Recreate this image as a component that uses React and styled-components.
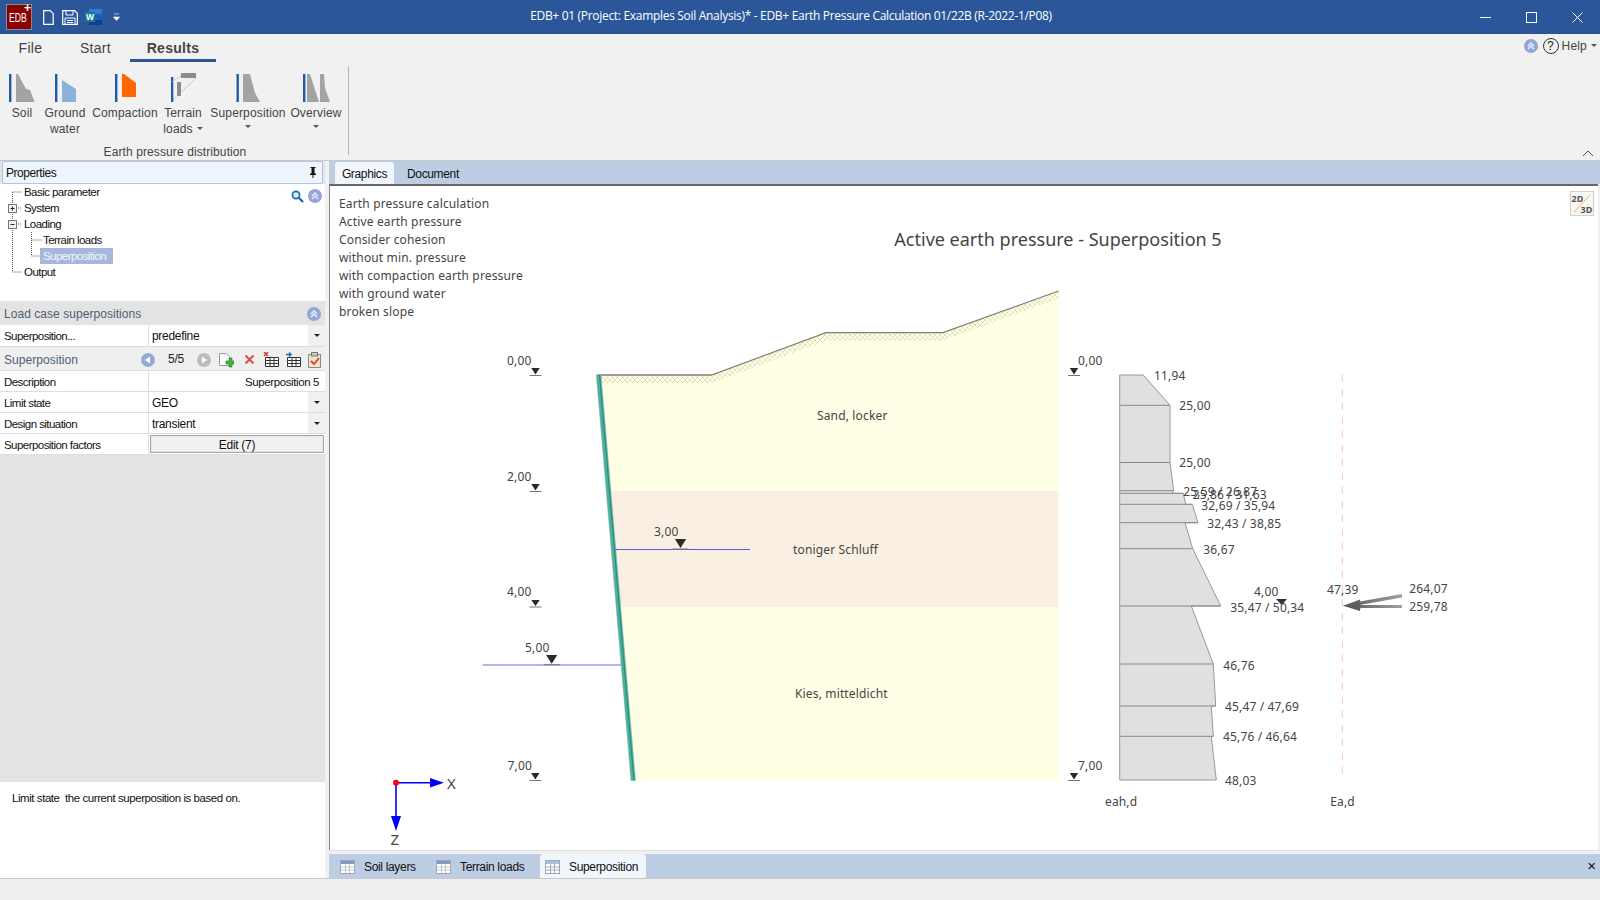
import React from "react";
import styled, { createGlobalStyle } from "styled-components";

const UI = `"Liberation Sans", Arial, sans-serif`;
const CAD = `"Noto Sans", "Open Sans", sans-serif`;

const Global = createGlobalStyle`
  html, body { margin: 0; padding: 0; background: #f1f0ef; overflow: hidden; }
  #root { width: 1600px; height: 900px; }
  * { box-sizing: border-box; }
`;

const Page = styled.div`
  width: 1600px; height: 900px; display: flex; flex-direction: column;
  font-family: ${UI}; font-size: 12px; color: #111; background: #f1f1f1;
`;

/* ---------- title bar ---------- */
const TitleBar = styled.header`
  height: 34px; flex: none; background: #2b579a; color: #fff;
  display: flex; align-items: center;
`;
const Quick = styled.div`width: 122px; flex: none; display: flex; align-items: center; padding-left: 6px;`;
const Logo = styled.div`
  width: 26px; height: 26px; background: #8b0000; border: 1px solid #8a8a8a; position: relative;
  font: 400 12px/26px "Liberation Sans", sans-serif; color: #fff; text-align: center;
  &::after { content: "+"; position: absolute; right: 0; top: -3px; font-size: 12px; line-height: 12px; font-weight: 700; }
`;
const LogoText = styled.span`display: inline-block; transform: scaleX(0.72); transform-origin: 45% 50%; margin-left: -2px;`;
const QuickIcon = styled.svg`display: block; flex: none; margin-left: ${p => p.$ml}px;`;
const Title = styled.div`flex: 1; text-align: center; font: 400 12px/16px "Open Sans", sans-serif; margin-top: -3px; letter-spacing: -0.31px;`;
const WinControls = styled.div`width: 140px; flex: none; display: flex; align-items: center;`;
const WinBtn = styled.svg`display: block; flex: none; margin-left: ${p => p.$ml}px;`;

/* ---------- ribbon ---------- */
const RibbonTabs = styled.nav`
  height: 28px; flex: none; display: flex; align-items: flex-start; position: relative; background: #f1f1f1;
`;
const RibbonTab = styled.div`
  width: ${p => p.$w}px; height: 28px; text-align: center; font: ${p => p.$on ? 700 : 400} 14px/29px ${UI}; color: #444; letter-spacing: 0.3px;
  border-bottom: ${p => p.$on ? "3px solid #2b579a" : "none"};
`;
const HelpArea = styled.div`
  margin-left: auto; display: flex; align-items: center; height: 24px; padding-right: 3px; font: 12px/24px ${UI}; color: #444; letter-spacing: 0.2px;
`;
const HelpMark = styled.span`
  width: 16px; height: 16px; border: 1.3px solid #333; border-radius: 50%; font: 12px/14px ${UI};
  text-align: center; margin: 0 3px 0 5px; color: #222;
`;
const Ribbon = styled.section`
  height: 99px; flex: none; display: flex; position: relative; background: #f1f1f1; border-bottom: 1px solid #c8c8c8; padding-left: 4px;
`;
const RibbonGroup = styled.div`
  width: 344px; height: 98px; display: flex; flex-direction: column;
`;
const RibbonSeparator = styled.div`width: 1px; margin: 4px 0 5px; background: #b4b4b4;`;
const RibbonButtons = styled.div`display: flex; height: 82px; padding-top: 10px;`;
const RibbonButton = styled.div`
  width: ${p => p.$w}px; display: flex; flex-direction: column; align-items: center;
  font: 12px/16px ${UI}; color: #444; text-align: center; letter-spacing: 0.15px;
`;
const RibbonIcon = styled.svg`display: block; margin-bottom: 1px;`;
const GroupLabel = styled.div`
  width: 342px; height: 16px; text-align: center; font: 12px/17px ${UI}; color: #444; letter-spacing: 0.1px;
`;
const Caret = styled.span`
  display: inline-block; width: 0; height: 0; border: 3px solid transparent; border-top: 3px solid #555; border-bottom: 0;
  margin: ${p => p.$block ? "4px auto 0" : "0 0 2px 4px"}; vertical-align: middle;
`;
const Collapse = styled.svg`position: absolute; right: 6px; bottom: 3px;`;

/* ---------- main ---------- */
const Main = styled.main`flex: 1; display: flex; min-height: 0;`;
const LeftPane = styled.aside`
  width: 325px; flex: none; display: flex; flex-direction: column; background: #e3e3e3;
`;
const PropHeader = styled.div`
  height: 23px; flex: none; background: #eef5fd; border: 1px solid #a9c6ea; border-radius: 2px; margin: 0 2px;
  display: flex; align-items: center; justify-content: space-between; padding: 0 5px 0 3px; font-size: 12px; letter-spacing: -0.45px;
`;
const Tree = styled.div`height: 117px; flex: none; background: #fff; position: relative;`;
const TreeLines = styled.svg`position: absolute; left: 0; top: 0;`;
const TreeRow = styled.div`
  height: 16px; line-height: 16px; padding-left: ${p => p.$x}px; font-size: 11.5px; letter-spacing: -0.55px; position: relative;
`;
const TreeText = styled.span`
  display: inline-block; height: 16px; padding: 0 ${p => p.$sel ? "7px 0 3px" : "0"};
  background: ${p => p.$sel ? "#a4b8de" : "transparent"}; color: ${p => p.$sel ? "#f4f6fb" : "#111"};
`;
const TreeTools = styled.div`position: absolute; right: 3px; top: 5px; display: flex; align-items: center; gap: 3px;`;
const SectionHead = styled.div`
  height: 24px; flex: none; background: #e3e3e3; display: flex; align-items: center; justify-content: space-between;
  padding: 1px 4px 0 4px; color: #4f5e72; font: 12px/24px ${UI}; letter-spacing: 0.05px;
`;
const GridRow = styled.div`
  height: ${p => p.$h || 21}px; flex: none; display: flex; background: #fff; border-bottom: 1px solid #dedede;
`;
const Cell = styled.div`
  width: ${p => p.$w}px; flex: ${p => p.$w ? "none" : 1}; display: flex; align-items: center;
  padding: ${p => p.$first ? "0 4px" : "1px 4px 0"}; padding-right: ${p => p.$right ? 6 : 4}px; padding-left: ${p => p.$w ? 4 : 3}px;
  border-right: ${p => p.$w ? "1px solid #dedede" : "none"}; position: relative;
  font-size: ${p => p.$tight ? 11.5 : 12}px; letter-spacing: ${p => p.$right ? -0.4 : p.$tight ? -0.55 : -0.3}px;
  justify-content: ${p => p.$right ? "flex-end" : "flex-start"};
`;
const DropBtn = styled.span`
  position: absolute; right: 0; top: 0; bottom: 0; width: 17px; background: #f0f0f0; display: flex; align-items: center; justify-content: center;
  &::after { content: ""; border: 3px solid transparent; border-top: 3px solid #222; border-bottom: 0; }
`;
const SubHead = styled.div`
  height: 24px; flex: none; background: #efefef; border-bottom: 1px solid #dedede; display: flex; align-items: center;
  padding: 2px 0 0 4px; color: #4f5e72; font: 12px/24px ${UI}; letter-spacing: 0.05px;
`;
const Pager = styled.div`margin-left: auto; display: flex; align-items: center; color: #222; font: 12px ${UI};`;
const PagerText = styled.span`width: 42px; text-align: center; letter-spacing: -0.3px; margin-top: -2px;`;
const PagerIcon = styled.svg`display: block; flex: none; margin-right: ${p => p.$mr || 0}px;`;
const EditBtn = styled.div`
  margin: 1px 1px 1px 1px; flex: 1; height: 18px; border: 1px solid #a8a8a8; background: #f1f1f1; box-shadow: inset 0 0 0 1px #e6e6e6;
  text-align: center; line-height: 18px; letter-spacing: -0.3px;
`;
const Filler = styled.div`flex: 1; background: #e3e3e3;`;
const HelpBox = styled.div`
  height: 96px; flex: none; background: #fff; padding: 8px 12px; font-size: 11.5px; letter-spacing: -0.44px; line-height: 16px; white-space: pre;
`;

const RightPane = styled.div`flex: 1; display: flex; flex-direction: column; min-width: 0;`;
const DocTabs = styled.div`
  height: 23px; flex: none; margin-left: 4px; background: #bccde4; display: flex; align-items: flex-end; padding-left: 6px;
`;
const DocTab = styled.div`
  width: ${p => p.$w}px; height: 22px; text-align: center; line-height: 24px; font-size: 12px; letter-spacing: -0.35px; color: #111;
  background: ${p => p.$on ? "#f0f6fc" : "transparent"}; border-radius: 3px 3px 0 0; margin-right: ${p => p.$mr || 0}px;
`;
const Canvas = styled.div`
  flex: none; height: 666px; margin: 0 2px 0 4px; background: #fff; border-top: 2px solid #666; border-left: 1px solid #888;
`;
const Drawing = styled.svg`display: block;`;
const DrawText = styled.text`
  font-family: ${CAD}; font-size: ${p => p.$size || 12}px; fill: ${p => p.$fill || "#444"}; dominant-baseline: central;
  letter-spacing: ${p => p.$ls ?? 0.15}px;
`;
const BottomGap = styled.div`height: 4px; flex: none; margin-left: 4px; background: #f1f1f1; border-top: 1px solid #e0e0e0;`;
const BottomTabs = styled.div`
  height: 24px; flex: none; margin-left: 4px; background: #bccde4; display: flex; align-items: center; position: relative; padding-left: 11px;
`;
const BottomTab = styled.div`
  height: 24px; width: ${p => p.$w}px; display: flex; align-items: center; padding: 1px 0 0 ${p => p.$pl}px; border-radius: 4px 4px 0 0;
  background: ${p => p.$on ? "#f0f6fc" : "transparent"}; font-size: 12px; letter-spacing: -0.33px; color: #111;
`;
const TabIcon = styled.svg`display: block; flex: none; margin-right: 9px;`;
const CloseX = styled.div`position: absolute; right: 4px; top: 3px; font: 15px/18px ${UI}; color: #111;`;
const StatusBar = styled.footer`height: 22px; flex: none; background: #f1efee; border-top: 1px solid #c8c8c8;`;

/* ---------- small drawings ---------- */
const ChevronCircle = ({ size = 14 }) => (
  <svg width={size} height={size} viewBox="0 0 14 14" style={{ display: "block" }}>
    <circle cx="7" cy="7" r="7" fill="#93a6d9" />
    <path d="M4 7l3-3 3 3M4 10l3-3 3 3" fill="none" stroke="#e8f2ff" strokeWidth="1.4" />
  </svg>
);

const TableGlyph = ({ w = 15, h = 14, faded }) => (
  <TabIcon width={w} height={h} viewBox="0 0 15 14">
    <rect x=".5" y=".5" width="14" height="13" fill="#fff" stroke="#9aa8bc" />
    <rect x="1" y="1" width="13" height="3" fill={faded ? "#7f9cc8" : "#a9bfe0"} />
    <path d="M5.5 4v9M9.5 4v9M1 7h13M1 10h13" stroke={faded ? "#c4c9d0" : "#a4aebb"} strokeWidth="1" />
  </TabIcon>
);

const ribbonButtons = [
  { w: 36, cx: 22, lines: ["Soil"], draw: <>
    <rect x="9" y="74" width="2.4" height="28" fill="#1f5ba8" />
    <polygon points="16,74 18,74 26,89 30,90 34.5,102 16,102" fill="#a3a3a3" /></> },
  { w: 50, cx: 65, lines: ["Ground", "water"], draw: <>
    <rect x="55" y="74" width="2.4" height="28" fill="#1f5ba8" />
    <polygon points="62,80 76,89 76,102 62,102" fill="#8db0dc" /></> },
  { w: 70, cx: 125, lines: ["Compaction"], draw: <>
    <rect x="115" y="74" width="2.4" height="28" fill="#1f5ba8" />
    <polygon points="122,74 124,74 136,83 136,97 122,97" fill="#ff6600" /></> },
  { w: 46, cx: 183, lines: ["Terrain", "loads"], caretInline: true, draw: <>
    <rect x="171" y="77" width="2.3" height="25" fill="#1f5ba8" />
    <path d="M172 82 L181 76 M196 78 L173 100" stroke="#b8b8b8" strokeWidth="1" fill="none" strokeDasharray="2 1" />
    <rect x="181" y="73" width="15" height="5" fill="#8c8c8c" />
    <rect x="177" y="82" width="4" height="14" fill="#8c8c8c" /></> },
  { w: 84, cx: 248, lines: ["Superposition"], caret: true, draw: <>
    <rect x="236.5" y="74" width="2.4" height="28" fill="#1f5ba8" />
    <polygon points="243,74 250,74 255,93 260,102 243,102" fill="#a3a3a3" /></> },
  { w: 52, cx: 316, lines: ["Overview"], caret: true, draw: <>
    <rect x="303" y="74" width="2.4" height="28" fill="#1f5ba8" />
    <polygon points="307,74 310,74 319,102 307,102" fill="#a3a3a3" />
    <polygon points="320,74 324,74 325,88 330,102 320,102" fill="#a3a3a3" /></> },
];

/* ---------- canvas data (page coordinates) ---------- */
const infoLines = ["Earth pressure calculation", "Active earth pressure", "Consider cohesion", "without min. pressure", "with compaction earth pressure", "with ground water", "broken slope"];
const infoY = [203, 221, 239, 257, 275, 293, 311];

const groundPts = "597,375 711.5,375 826,332.7 943,332.7 1058.5,291";
const levels = [
  { t: "0,00", x: 507, y: 360.5, tx: 535.5, ty: 368, base: 375.5, hw: 6 },
  { t: "2,00", x: 507, y: 476.5, tx: 535.5, ty: 484, base: 491.5, hw: 6 },
  { t: "4,00", x: 507, y: 591, tx: 535.5, ty: 600, base: 607, hw: 6 },
  { t: "5,00", x: 525, y: 647.7, tx: 551.7, ty: 655, base: 664.7, hw: 8 },
  { t: "7,00", x: 507.5, y: 765.5, tx: 535.3, ty: 773, base: 780.5, hw: 6 },
  { t: "3,00", x: 654, y: 531.5, tx: 680.5, ty: 539, base: 549, hw: 8 },
  { t: "0,00", x: 1078, y: 360.5, tx: 1074, ty: 368, base: 375.5, hw: 6 },
  { t: "7,00", x: 1078, y: 765.5, tx: 1074, ty: 773, base: 780.5, hw: 6 },
];

const pressureOutline = "1119.7,375 1143.3,375 1170,405.3 1170,462.5 1173.7,490.7 1172,493.3 1183.3,493.3 1185.7,504.3 1192.3,504.3 1198,522.7 1185,522.7 1192.7,548.7 1220.7,606 1191.3,606 1213.3,664 1215.7,706 1211.3,706 1213.3,736.3 1211.3,736.3 1216.3,780 1119.7,780";
const pressureRows = [
  [405.3, 1170], [462.5, 1170], [490.7, 1173], [493.3, 1183], [504.3, 1192], [522.7, 1198], [548.7, 1192.7], [606, 1220.7], [664, 1213.3], [706, 1215.7], [736.3, 1213.3],
];
const pressureLabels = [
  ["11,94", 1154, 375.7], ["25,00", 1179.3, 405.7], ["25,00", 1179.3, 462.3], ["25,59 / 26,87", 1183.3, 491.7],
  ["25,86 / 31,63", 1192.7, 494], ["32,69 / 35,94", 1201.3, 505.7], ["32,43 / 38,85", 1207.3, 523.7], ["36,67", 1203.3, 549.3],
  ["4,00", 1254, 591.7], ["35,47 / 50,34", 1230.3, 607.7], ["46,76", 1223.3, 665.7], ["45,47 / 47,69", 1225, 706.7],
  ["45,76 / 46,64", 1223, 736.7], ["48,03", 1225, 780.7], ["eah,d", 1105, 801.7], ["Ea,d", 1330.3, 801.7],
  ["47,39", 1327, 589], ["264,07", 1409.3, 588.7], ["259,78", 1409.3, 606.7],
];

export default function App() {
  return (
    <Page>
      <Global />
      <TitleBar>
        <Quick>
          <Logo><LogoText>EDB</LogoText></Logo>
          <QuickIcon $ml={11} width="11" height="15" viewBox="0 0 11 15">
            <path d="M.7.7h6.5l3 3v10.6H.7z" fill="none" stroke="#fff" strokeWidth="1.2" />
          </QuickIcon>
          <QuickIcon $ml={8} width="16" height="15" viewBox="0 0 16 15">
            <path d="M.7.7h12l2.6 2.6v11H.7z" fill="none" stroke="#fff" strokeWidth="1.2" />
            <path d="M4 1v4h7V1M3 8h10v6M3 8v6M5 10.5h6M5 12.5h6" fill="none" stroke="#fff" strokeWidth="1" />
          </QuickIcon>
          <QuickIcon $ml={7} width="17" height="16" viewBox="0 0 17 16">
            <rect x="4" y="0" width="13" height="16" fill="#1c5fb0" />
            <rect x="4" y="0" width="13" height="5" fill="#2b7cd3" />
            <rect x="4" y="11" width="13" height="5" fill="#103f91" />
            <rect x="0" y="3" width="10" height="10" fill="#187b8f" />
            <text x="5" y="11" textAnchor="middle" fontFamily="Liberation Sans" fontWeight="700" fontSize="8.5" fill="#fff">W</text>
          </QuickIcon>
          <QuickIcon $ml={11} width="7" height="8" viewBox="0 0 7 8">
            <path d="M1 1h5M.5 4h6l-3 3.5z" fill="#fff" stroke="#fff" strokeWidth=".6" />
          </QuickIcon>
        </Quick>
        <Title>EDB+ 01 (Project: Examples Soil Analysis)* - EDB+ Earth Pressure Calculation 01/22B (R-2022-1/P08)</Title>
        <WinControls>
          <WinBtn $ml={20} width="11" height="11" viewBox="0 0 11 11"><path d="M0 5.5h11" stroke="#fff" strokeWidth="1" /></WinBtn>
          <WinBtn $ml={35} width="11" height="11" viewBox="0 0 11 11"><rect x=".5" y=".5" width="10" height="10" fill="none" stroke="#fff" /></WinBtn>
          <WinBtn $ml={35} width="11" height="11" viewBox="0 0 11 11"><path d="M.5.5l10 10M10.5.5l-10 10" stroke="#fff" /></WinBtn>
        </WinControls>
      </TitleBar>

      <RibbonTabs>
        <RibbonTab $w={61}>File</RibbonTab>
        <RibbonTab $w={69}>Start</RibbonTab>
        <RibbonTab $w={86} $on>Results</RibbonTab>
        <HelpArea>
          <ChevronCircle />
          <HelpMark>?</HelpMark>
          Help
          <Caret />
        </HelpArea>
      </RibbonTabs>
      <Ribbon>
        <RibbonGroup>
          <RibbonButtons>
            {ribbonButtons.map(b => (
              <RibbonButton key={b.lines[0]} $w={b.w}>
                <RibbonIcon width="40" height="32" viewBox={`${b.cx - 20} 72 40 32`}>{b.draw}</RibbonIcon>
                {b.lines.map((l, i) => (
                  <span key={l}>{l}{b.caretInline && i === b.lines.length - 1 && <Caret />}</span>
                ))}
                {b.caret && <Caret $block />}
              </RibbonButton>
            ))}
          </RibbonButtons>
          <GroupLabel>Earth pressure distribution</GroupLabel>
        </RibbonGroup>
        <RibbonSeparator />
        <Collapse width="12" height="7" viewBox="0 0 12 7"><path d="M1 6l5-5 5 5" fill="none" stroke="#555" /></Collapse>
      </Ribbon>

      <Main>
        <LeftPane>
          <PropHeader>
            Properties
            <svg width="8" height="11" viewBox="0 0 8 11"><path d="M1.5 0h5v1h-1v5l1.5 1v1H4.5v3h-1V8H1V7l1.5-1V1h-1z" fill="#111" /></svg>
          </PropHeader>
          <Tree>
            <TreeLines width="60" height="100" viewBox="0 184 60 100">
              <path d="M12.5 192V272H22M12.5 192H22M18 208H22M18 224H22M31.5 232V256H40M31.5 240H42" fill="none" stroke="#555" strokeDasharray="1 1" />
              <rect x="8.5" y="204.5" width="8" height="8" fill="#f4f4f4" stroke="#777" />
              <path d="M10.5 208.5h4M12.5 206.5v4" stroke="#224" />
              <rect x="8.5" y="220.5" width="8" height="8" fill="#f4f4f4" stroke="#777" />
              <path d="M10.5 224.5h4" stroke="#224" />
            </TreeLines>
            <TreeRow $x={24}><TreeText>Basic parameter</TreeText></TreeRow>
            <TreeRow $x={24}><TreeText>System</TreeText></TreeRow>
            <TreeRow $x={24}><TreeText>Loading</TreeText></TreeRow>
            <TreeRow $x={43}><TreeText>Terrain loads</TreeText></TreeRow>
            <TreeRow $x={40}><TreeText $sel>Superposition</TreeText></TreeRow>
            <TreeRow $x={24}><TreeText>Output</TreeText></TreeRow>
            <TreeTools>
              <svg width="14" height="13" viewBox="0 0 14 13">
                <circle cx="5" cy="5" r="3.6" fill="#d9ecfa" stroke="#1b6eb0" strokeWidth="1.7" />
                <path d="M8 8l4 4" stroke="#1b5f9c" strokeWidth="2.2" />
              </svg>
              <ChevronCircle />
            </TreeTools>
          </Tree>
          <SectionHead>Load case superpositions<ChevronCircle /></SectionHead>
          <GridRow $h={22}>
            <Cell $w={149} $tight $first>Superposition...</Cell>
            <Cell>predefine<DropBtn /></Cell>
          </GridRow>
          <SubHead>
            Superposition
            <Pager>
              <PagerIcon width="14" height="14" viewBox="0 0 14 14"><circle cx="7" cy="7" r="7" fill="#95a9d8" /><path d="M9 3.5v7L4 7z" fill="#fff" /></PagerIcon>
              <PagerText>5/5</PagerText>
              <PagerIcon $mr={7} width="14" height="14" viewBox="0 0 14 14"><circle cx="7" cy="7" r="7" fill="#bcbcbc" /><path d="M5 3.5v7L10 7z" fill="#fff" /></PagerIcon>
              <PagerIcon $mr={8.5} width="16" height="16" viewBox="0 0 16 16">
                <path d="M1.5 1.5h7l3 3v9h-10z" fill="#fff" stroke="#9a9a9a" />
                <path d="M8 9h3V6h3v3h2v3h-2v3h-3v-3H8z" fill="#3fb53f" stroke="#1f7d1f" strokeWidth=".6" />
              </PagerIcon>
              <PagerIcon $mr={7.5} width="13" height="13" viewBox="0 0 13 13"><path d="M2.5 2.5l8 8M10.5 2.5l-8 8" stroke="#d05a50" strokeWidth="2.2" /></PagerIcon>
              <PagerIcon $mr={6} width="16" height="15" viewBox="0 0 16 15">
                <path d="M2.5 5.5h13v9h-13zM7 5.5v9M11 5.5v9M2.5 8.5h13M2.5 11.5h13" fill="#fff" stroke="#333" />
                <path d="M1 0l4 4M5 0L1 4" stroke="#c8382c" strokeWidth="1.4" />
              </PagerIcon>
              <PagerIcon $mr={5.5} width="16" height="15" viewBox="0 0 16 15">
                <path d="M2.5 5.5h13v9h-13zM7 5.5v9M11 5.5v9M2.5 8.5h13M2.5 11.5h13" fill="#fff" stroke="#333" />
                <path d="M1 2.5h5M4 .5l2.2 2L4 4.5" fill="none" stroke="#1a6eb4" strokeWidth="1.4" />
              </PagerIcon>
              <PagerIcon $mr={3.5} width="15" height="16" viewBox="0 0 15 16">
                <rect x="1.5" y="2.5" width="12" height="13" fill="#f3e3c6" stroke="#8a8a8a" />
                <rect x="4.5" y="0.5" width="6" height="3.5" fill="#c8c8c8" stroke="#777" />
                <path d="M4 9l3 3 5-6" fill="none" stroke="#d0402f" strokeWidth="1.8" />
              </PagerIcon>
            </Pager>
          </SubHead>
          <GridRow>
            <Cell $w={149} $tight>Description</Cell>
            <Cell $right $tight>Superposition 5</Cell>
          </GridRow>
          <GridRow>
            <Cell $w={149} $tight>Limit state</Cell>
            <Cell>GEO<DropBtn /></Cell>
          </GridRow>
          <GridRow>
            <Cell $w={149} $tight>Design situation</Cell>
            <Cell>transient<DropBtn /></Cell>
          </GridRow>
          <GridRow>
            <Cell $w={149} $tight>Superposition factors</Cell>
            <EditBtn>Edit (7)</EditBtn>
          </GridRow>
          <Filler />
          <HelpBox>{"Limit state  the current superposition is based on."}</HelpBox>
        </LeftPane>

        <RightPane>
          <DocTabs>
            <DocTab $w={59} $on $mr={13}>Graphics</DocTab>
            <DocTab $w={51}>Document</DocTab>
          </DocTabs>
          <Canvas>
            <Drawing width="1265" height="664" viewBox="330 186 1265 664">
              <defs>
                <pattern id="hatch" width="5" height="5" patternUnits="userSpaceOnUse">
                  <path d="M0 5L5 0M0 0L5 5" stroke="#cfcda6" strokeWidth=".6" />
                </pattern>
                <linearGradient id="shaft" x1="1402" x2="1350" y1="0" y2="0" gradientUnits="userSpaceOnUse">
                  <stop offset="0" stopColor="#a0a0a0" />
                  <stop offset="1" stopColor="#606060" />
                </linearGradient>
              </defs>

              {infoLines.map((l, i) => <DrawText key={l} x={339} y={infoY[i]}>{l}</DrawText>)}
              <DrawText x={1058} y={239} $size={18} $ls={0} textAnchor="middle">Active earth pressure - Superposition 5</DrawText>

              {/* soil layers */}
              <polygon points="601,375 711.5,375 826,332.7 943,332.7 1058.5,291 1058.5,491 610.5,491" fill="#ffffe6" />
              <polygon points="610.5,491 1058.5,491 1058.5,607 620.5,607" fill="#f9f0e3" />
              <polygon points="620.5,607 1058.5,607 1058.5,780.5 636,780.5" fill="#ffffe6" />
              <polygon points="601,375 711.5,375 826,332.7 943,332.7 1058.5,291 1058.5,298.5 943,340.5 826,340.5 711.5,383 602,383" fill="url(#hatch)" />
              <polyline points={groundPts} fill="none" stroke="#80807a" strokeWidth="1.3" />
              <polygon points="596.3,375 601,375 635.5,780.5 631,780.5" fill="#4db09c" stroke="#7fb5aa" strokeWidth=".5" />
              <line x1="599.6" y1="375" x2="634" y2="780.5" stroke="#1f7f70" strokeWidth=".8" />

              <DrawText x={817} y={415}>Sand, locker</DrawText>
              <DrawText x={793} y={549}>toniger Schluff</DrawText>
              <DrawText x={795} y={693}>Kies, mitteldicht</DrawText>

              {/* water tables */}
              <line x1="615" x2="750" y1="549.5" y2="549.5" stroke="#5c5ce0" strokeWidth="1.2" />
              <line x1="482.7" x2="621" y1="665" y2="665" stroke="#6a6ae6" strokeWidth="1.2" />

              {/* level marks */}
              {levels.map(l => (
                <g key={`${l.t}${l.x}`}>
                  <DrawText x={l.x} y={l.y}>{l.t}</DrawText>
                  <polygon points={`${l.tx - l.hw * .7},${l.ty} ${l.tx + l.hw * .7},${l.ty} ${l.tx},${l.base - 1}`} fill="#2a2a2a" />
                  <line x1={l.tx - l.hw} x2={l.tx + l.hw} y1={l.base} y2={l.base} stroke="#777" />
                </g>
              ))}

              {/* pressure diagram */}
              <polygon points={pressureOutline} fill="#e0e0e0" stroke="#999" strokeWidth="1" />
              {pressureRows.map(([y, x]) => <line key={y} x1="1119.7" x2={x} y1={y} y2={y} stroke="#8a8a8a" />)}
              <polygon points="1276,599 1287,599 1281.7,605" fill="#333" />
              {pressureLabels.map(([t, x, y]) => <DrawText key={`${t}${y}`} x={x} y={y}>{t}</DrawText>)}

              {/* resultant */}
              <line x1="1342.3" x2="1342.3" y1="375" y2="779" stroke="#ffc0c0" strokeDasharray="7 7" />
              <polygon points="1402,594 1402,597.4 1358,605.2 1357,602" fill="url(#shaft)" />
              <polygon points="1343,605.7 1360,599.5 1361,608.5" fill="#666" />
              <rect x="1358" y="605" width="44" height="3" fill="url(#shaft)" />
              <polygon points="1343,605.7 1360,602 1360,611" fill="#5c5c5c" />

              {/* 2D / 3D switch */}
              <g>
                <rect x="1570.5" y="191.5" width="23" height="24" fill="#f7f7f7" stroke="#d0d0d0" />
                <line x1="1574" x2="1590" y1="212" y2="195" stroke="#f0b060" />
                <DrawText x="1571.5" y="198" $size={9} $fill="#555" $ls={0} fontWeight="700">2D</DrawText>
                <DrawText x="1580.5" y="209" $size={9} $fill="#555" $ls={0} fontWeight="700">3D</DrawText>
              </g>

              {/* axes */}
              <line x1="396" x2="432" y1="782.7" y2="782.7" stroke="#0000ff" strokeWidth="1.6" />
              <polygon points="444,782.7 430,778 430,787.4" fill="#0000ff" />
              <line x1="396" x2="396" y1="782.7" y2="818" stroke="#0000ff" strokeWidth="1.6" />
              <polygon points="396,831 391,816 401,816" fill="#0000ff" />
              <circle cx="396" cy="782.7" r="3" fill="#ff0000" />
              <DrawText x={447} y={783} $size={15} $ls={0}>X</DrawText>
              <DrawText x={390.5} y={838.5} $size={15} $ls={0}>Z</DrawText>
            </Drawing>
          </Canvas>
          <BottomGap />
          <BottomTabs>
            <BottomTab $w={96} $pl={0}><TableGlyph faded />Soil layers</BottomTab>
            <BottomTab $w={104} $pl={0}><TableGlyph faded />Terrain loads</BottomTab>
            <BottomTab $w={106} $pl={5} $on><TableGlyph />Superposition</BottomTab>
            <CloseX>×</CloseX>
          </BottomTabs>
        </RightPane>
      </Main>
      <StatusBar />
    </Page>
  );
}
